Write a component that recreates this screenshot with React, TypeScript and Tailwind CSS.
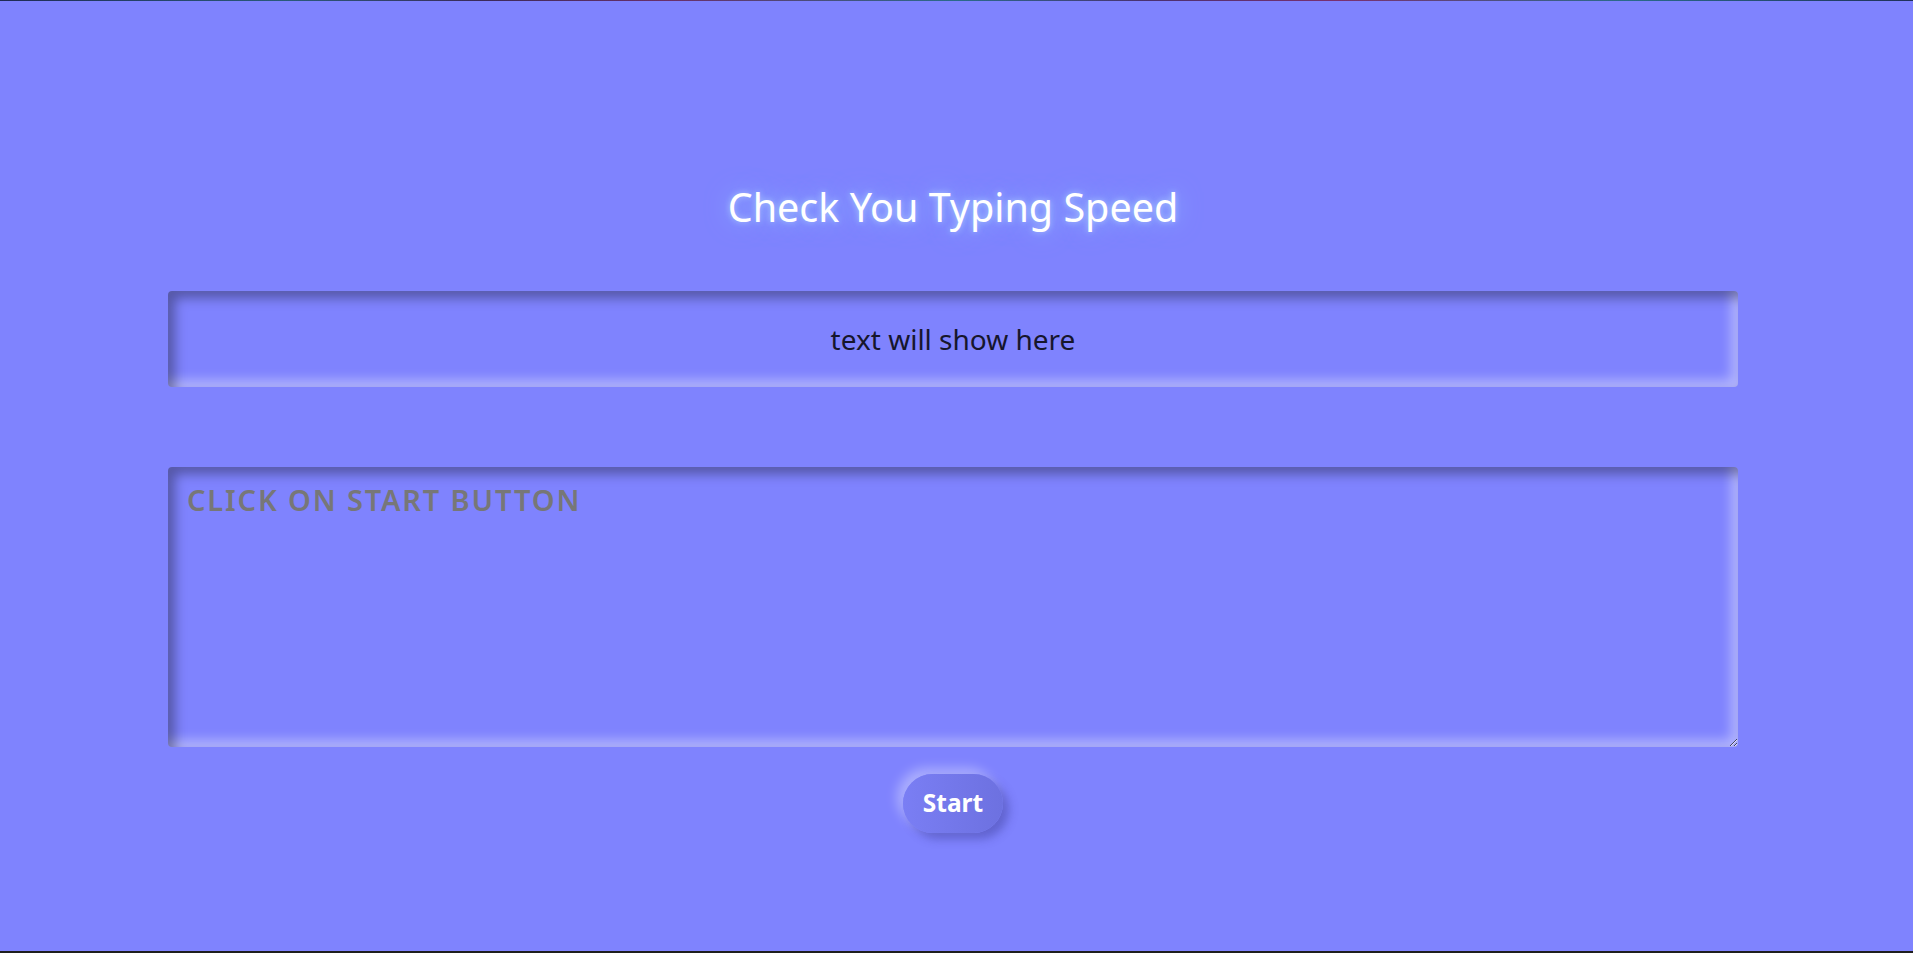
import React from "react";

export default function App() {
  return (
    <div className="w-full h-[953px] flex flex-col bg-[#7f83fe]" style={{ fontFamily: '"Noto Sans", "Open Sans", sans-serif' }}>
      <div className="h-px w-full bg-[linear-gradient(90deg,#1f2a55_0%,#2a5a7a_15%,#3a2a5a_25%,#6a2f6a_35%,#2a6a8a_50%,#4a3070_60%,#7a3070_70%,#2a6a8a_85%,#20305a_100%)]" />
      <div className="flex-1 flex flex-col items-center pr-[7px]">
        <div className="mt-[177px] h-[60px] flex items-center text-[39.5px] text-white [text-shadow:0_0_6px_rgba(190,225,255,0.7),0_0_24px_rgba(140,195,255,0.9)]">
          Check You Typing Speed
        </div>
        <div className="mt-[53px] w-[1570px] h-[96px] rounded-[4px] flex items-center justify-center text-[28px] text-[#16162c] shadow-[inset_7px_7px_12px_rgba(0,0,0,0.34),inset_-7px_-7px_12px_rgba(255,255,255,0.4)]">
          text will show here
        </div>
        <textarea
          placeholder="CLICK ON START BUTTON"
          className="mt-[80px] w-[1570px] h-[280px] rounded-[4px] bg-transparent border-0 outline-none px-[19px] pt-[11px] text-[29px] font-semibold tracking-[1.85px] uppercase placeholder:text-[#777777] text-[#333] shadow-[inset_7px_7px_12px_rgba(0,0,0,0.34),inset_-7px_-7px_12px_rgba(255,255,255,0.4)]"
          style={{ fontFamily: '"Noto Sans", "Open Sans", sans-serif' }}
        />
        <button className="mt-[27px] w-[100px] h-[59px] rounded-full bg-[linear-gradient(90deg,#7a7ef4,#6d71e0)] text-white text-[24.5px] font-bold shadow-[6px_6px_10px_rgba(40,40,120,0.35),-6px_-6px_12px_rgba(255,255,255,0.35)]">
          Start
        </button>
      </div>
      <div className="h-[2px] w-full bg-[#1e1e1e]" />
    </div>
  );
}
